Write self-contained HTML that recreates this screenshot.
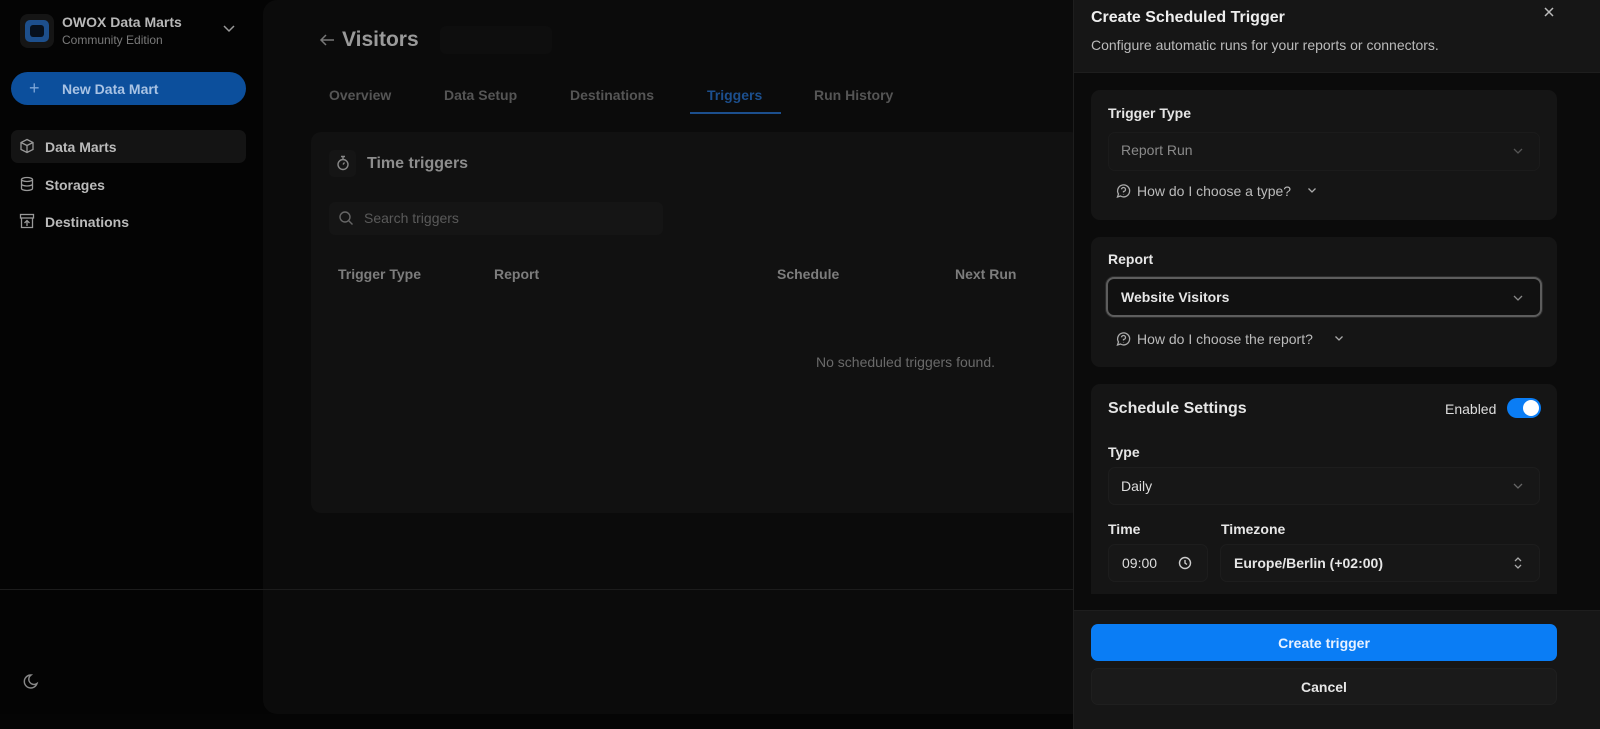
<!DOCTYPE html>
<html><head><meta charset="utf-8"><style>
*{box-sizing:border-box;margin:0;padding:0}
body{width:1600px;height:729px;overflow:hidden;background:#040404;font-family:"Liberation Sans",sans-serif;position:relative;color:#ddd}
.abs{position:absolute}
svg{display:block}
</style></head><body>
<!-- sidebar -->
<div class="abs" style="left:20px;top:14px;width:34px;height:34px;border-radius:8px;background:#151515"></div>
<div class="abs" style="left:25px;top:20px;width:24px;height:22px;border-radius:5px;background:#1d4f8c"></div>
<div class="abs" style="left:30px;top:25px;width:14px;height:12px;border-radius:3px;background:#07101c"></div>
<div class="abs" style="left:62px;top:14px;font-size:14px;font-weight:bold;color:#b8b8b8">OWOX Data Marts</div>
<div class="abs" style="left:62px;top:33px;font-size:12px;color:#7a7a7a">Community Edition</div>
<svg class="abs" style="left:222px;top:24px" width="14" height="10"><path d="M2 2l5 5 5-5" stroke="#999" stroke-width="1.5" fill="none"/></svg>
<div class="abs" style="left:11px;top:72px;width:235px;height:33px;border-radius:17px;background:#0c4f9c"></div>
<div class="abs" style="left:29px;top:78px;font-size:18px;color:#7ea7d8">+</div>
<div class="abs" style="left:62px;top:81px;font-size:14px;font-weight:bold;color:#a9c3e4">New Data Mart</div>
<div class="abs" style="left:11px;top:130px;width:235px;height:33px;border-radius:7px;background:#141414"></div>
<svg class="abs" style="left:19px;top:138px" width="16" height="16" fill="none" stroke="#999" stroke-width="1.3"><path d="M8 1.5l6 3v7l-6 3-6-3v-7z M2 4.5l6 3 6-3 M8 7.5v7"/></svg>
<div class="abs" style="left:45px;top:139px;font-size:14px;color:#bbb;font-weight:bold">Data Marts</div>
<svg class="abs" style="left:19px;top:176px" width="16" height="16" fill="none" stroke="#999" stroke-width="1.3"><ellipse cx="8" cy="3.5" rx="5.5" ry="2"/><path d="M2.5 3.5v9c0 1.1 2.5 2 5.5 2s5.5-.9 5.5-2v-9M2.5 8c0 1.1 2.5 2 5.5 2s5.5-.9 5.5-2"/></svg>
<div class="abs" style="left:45px;top:177px;font-size:14px;color:#bbb;font-weight:bold">Storages</div>
<svg class="abs" style="left:19px;top:213px" width="16" height="16" fill="none" stroke="#999" stroke-width="1.3"><rect x="1.5" y="1.5" width="13" height="3.5"/><path d="M2.5 5v9.5h11V5M8 13V8M5.5 10l2.5-2.5 2.5 2.5"/></svg>
<div class="abs" style="left:45px;top:214px;font-size:14px;color:#bbb;font-weight:bold">Destinations</div>
<svg class="abs" style="left:21px;top:673px" width="18" height="18" fill="none" stroke="#888" stroke-width="1.4"><path d="M10 2a6.5 6.5 0 1 0 6 8.5A5 5 0 0 1 10 2z"/></svg>
<!-- main -->
<div class="abs" style="left:263px;top:0;width:810px;height:714px;background:#0b0b0b;border-radius:14px 0 0 14px"></div>
<div class="abs" style="left:0;top:589px;width:1073px;height:1px;background:#1c1c1c"></div>
<div class="abs" style="left:0;top:714px;width:1073px;height:15px;background:#050505"></div>
<div class="abs" style="left:440px;top:26px;width:112px;height:28px;background:#0e0e0e;border-radius:6px"></div>
<svg class="abs" style="left:318px;top:32px" width="18" height="16" fill="none" stroke="#777" stroke-width="1.5"><path d="M16 8H3M8 3L3 8l5 5"/></svg>
<div class="abs" style="left:342px;top:28px;font-size:21px;font-weight:bold;color:#9a9a9a">Visitors</div>
<div class="abs" style="left:329px;top:87px;font-size:14px;color:#555;font-weight:bold">Overview</div>
<div class="abs" style="left:444px;top:87px;font-size:14px;color:#555;font-weight:bold">Data Setup</div>
<div class="abs" style="left:570px;top:87px;font-size:14px;color:#555;font-weight:bold">Destinations</div>
<div class="abs" style="left:707px;top:87px;font-size:14px;color:#1c4f8e;font-weight:bold">Triggers</div>
<div class="abs" style="left:690px;top:112px;width:91px;height:2px;background:#1c4f8e"></div>
<div class="abs" style="left:814px;top:87px;font-size:14px;color:#555;font-weight:bold">Run History</div>
<div class="abs" style="left:311px;top:132px;width:770px;height:381px;background:#111;border-radius:10px"></div>
<div class="abs" style="left:329px;top:150px;width:27px;height:27px;background:#151515;border-radius:5px"></div>
<svg class="abs" style="left:335px;top:155px" width="16" height="16" fill="none" stroke="#888" stroke-width="1.4"><circle cx="8" cy="9.5" r="5"/><path d="M6 1.5h4M8 1.5v3M8 9.5l1.5-2"/></svg>
<div class="abs" style="left:367px;top:155px;font-size:16px;font-weight:bold;color:#8d8d8d">Time triggers</div>
<div class="abs" style="left:329px;top:202px;width:334px;height:33px;background:#151515;border-radius:6px"></div>
<svg class="abs" style="left:338px;top:210px" width="16" height="16" fill="none" stroke="#666" stroke-width="1.4"><circle cx="7" cy="7" r="5"/><path d="M11 11l3.5 3.5"/></svg>
<div class="abs" style="left:364px;top:210px;font-size:14px;color:#5a5a5a">Search triggers</div>
<div class="abs" style="left:338px;top:266px;font-size:14px;font-weight:bold;color:#7d7d7d">Trigger Type</div>
<div class="abs" style="left:494px;top:266px;font-size:14px;font-weight:bold;color:#7d7d7d">Report</div>
<div class="abs" style="left:777px;top:266px;font-size:14px;font-weight:bold;color:#7d7d7d">Schedule</div>
<div class="abs" style="left:955px;top:266px;font-size:14px;font-weight:bold;color:#7d7d7d">Next Run</div>
<div class="abs" style="left:816px;top:354px;font-size:14px;color:#6a6a6a">No scheduled triggers found.</div>
<!-- drawer -->
<div class="abs" style="left:1073px;top:0;width:527px;height:729px;background:#0b0b0b;border-left:1px solid #1e1e1e"></div>
<div class="abs" style="left:1074px;top:0;width:526px;height:73px;background:#161616;border-bottom:1px solid #1e1e1e"></div>
<div class="abs" style="left:1091px;top:9px;font-size:16px;font-weight:bold;color:#eee">Create Scheduled Trigger</div>
<div class="abs" style="left:1091px;top:37px;font-size:14px;color:#bbb">Configure automatic runs for your reports or connectors.</div>
<svg class="abs" style="left:1543px;top:6px" width="12" height="12" stroke="#bbb" stroke-width="1.5"><path d="M2 2l8 8M10 2l-8 8"/></svg>
<div class="abs" style="left:1091px;top:90px;width:466px;height:130px;background:#151515;border-radius:9px"></div>
<div class="abs" style="left:1108px;top:105px;font-size:14px;font-weight:bold;color:#e6e6e6">Trigger Type</div>
<div class="abs" style="left:1108px;top:132px;width:432px;height:39px;background:#161616;border:1px solid #1b1b1b;border-radius:7px"></div>
<div class="abs" style="left:1121px;top:142px;font-size:14px;color:#8a8a8a">Report Run</div>
<svg class="abs" style="left:1512px;top:147px" width="12" height="8" fill="none" stroke="#555" stroke-width="1.3"><path d="M2 2l4 4 4-4"/></svg>
<svg class="abs" style="left:1115px;top:183px" width="16" height="16" fill="none" stroke="#aaa" stroke-width="1.3"><path d="M2.5 14l1-3a6 6 0 1 1 2 2z"/><path d="M6.5 6.3a2 2 0 1 1 2 2.2v1M8.5 11v.4"/></svg>
<div class="abs" style="left:1137px;top:183px;font-size:14px;color:#bbb">How do I choose a type?</div>
<svg class="abs" style="left:1307px;top:187px" width="10" height="7" fill="none" stroke="#aaa" stroke-width="1.3"><path d="M1.5 1.5l3.5 3.5 3.5-3.5"/></svg>
<div class="abs" style="left:1091px;top:237px;width:466px;height:130px;background:#151515;border-radius:9px"></div>
<div class="abs" style="left:1108px;top:251px;font-size:14px;font-weight:bold;color:#e6e6e6">Report</div>
<div class="abs" style="left:1106px;top:277px;width:436px;height:40px;background:#111;border:2px solid #5d5d5d;border-radius:8px;box-shadow:0 0 0 1px #2a2a2a"></div>
<div class="abs" style="left:1121px;top:289px;font-size:14px;font-weight:bold;color:#e6e6e6">Website Visitors</div>
<svg class="abs" style="left:1512px;top:294px" width="12" height="8" fill="none" stroke="#888" stroke-width="1.3"><path d="M2 2l4 4 4-4"/></svg>
<svg class="abs" style="left:1115px;top:331px" width="16" height="16" fill="none" stroke="#aaa" stroke-width="1.3"><path d="M2.5 14l1-3a6 6 0 1 1 2 2z"/><path d="M6.5 6.3a2 2 0 1 1 2 2.2v1M8.5 11v.4"/></svg>
<div class="abs" style="left:1137px;top:331px;font-size:14px;color:#bbb">How do I choose the report?</div>
<svg class="abs" style="left:1334px;top:335px" width="10" height="7" fill="none" stroke="#aaa" stroke-width="1.3"><path d="M1.5 1.5l3.5 3.5 3.5-3.5"/></svg>
<div class="abs" style="left:1091px;top:384px;width:466px;height:210px;background:#151515;border-radius:9px 9px 0 0"></div>
<div class="abs" style="left:1108px;top:400px;font-size:16px;font-weight:bold;color:#e6e6e6">Schedule Settings</div>
<div class="abs" style="left:1445px;top:401px;font-size:14px;color:#ddd">Enabled</div>
<div class="abs" style="left:1507px;top:398px;width:34px;height:20px;border-radius:10px;background:#0a7df5"></div>
<div class="abs" style="left:1523px;top:400px;width:16px;height:16px;border-radius:8px;background:#fff"></div>
<div class="abs" style="left:1108px;top:444px;font-size:14px;font-weight:bold;color:#e6e6e6">Type</div>
<div class="abs" style="left:1108px;top:467px;width:432px;height:38px;background:#171717;border:1px solid #1d1d1d;border-radius:7px"></div>
<div class="abs" style="left:1121px;top:478px;font-size:14px;color:#ddd">Daily</div>
<svg class="abs" style="left:1512px;top:482px" width="12" height="8" fill="none" stroke="#666" stroke-width="1.3"><path d="M2 2l4 4 4-4"/></svg>
<div class="abs" style="left:1108px;top:521px;font-size:14px;font-weight:bold;color:#e6e6e6">Time</div>
<div class="abs" style="left:1221px;top:521px;font-size:14px;font-weight:bold;color:#e6e6e6">Timezone</div>
<div class="abs" style="left:1108px;top:544px;width:100px;height:38px;background:#171717;border:1px solid #1d1d1d;border-radius:7px"></div>
<div class="abs" style="left:1122px;top:555px;font-size:14px;color:#ddd">09:00</div>
<svg class="abs" style="left:1178px;top:556px" width="14" height="14" fill="none" stroke="#ccc" stroke-width="1.4"><circle cx="7" cy="7" r="5.5"/><path d="M7 4v3l2 1.5"/></svg>
<div class="abs" style="left:1220px;top:544px;width:320px;height:38px;background:#171717;border:1px solid #1d1d1d;border-radius:7px"></div>
<div class="abs" style="left:1234px;top:555px;font-size:14px;font-weight:bold;color:#e6e6e6">Europe/Berlin (+02:00)</div>
<svg class="abs" style="left:1513px;top:555px" width="10" height="16" fill="none" stroke="#aaa" stroke-width="1.3"><path d="M2 6l3-3 3 3M2 10l3 3 3-3"/></svg>
<div class="abs" style="left:1074px;top:610px;width:526px;height:119px;background:#161616;border-top:1px solid #1e1e1e"></div>
<div class="abs" style="left:1091px;top:624px;width:466px;height:37px;border-radius:7px;background:#0a7df5"></div>
<div class="abs" style="left:1091px;top:635px;width:466px;text-align:center;font-size:14px;font-weight:bold;color:#e8f2ff">Create trigger</div>
<div class="abs" style="left:1091px;top:668px;width:466px;height:37px;border-radius:7px;background:#1a1a1a;border:1px solid #1f1f1f"></div>
<div class="abs" style="left:1091px;top:679px;width:466px;text-align:center;font-size:14px;font-weight:bold;color:#e6e6e6">Cancel</div>
</body></html>
